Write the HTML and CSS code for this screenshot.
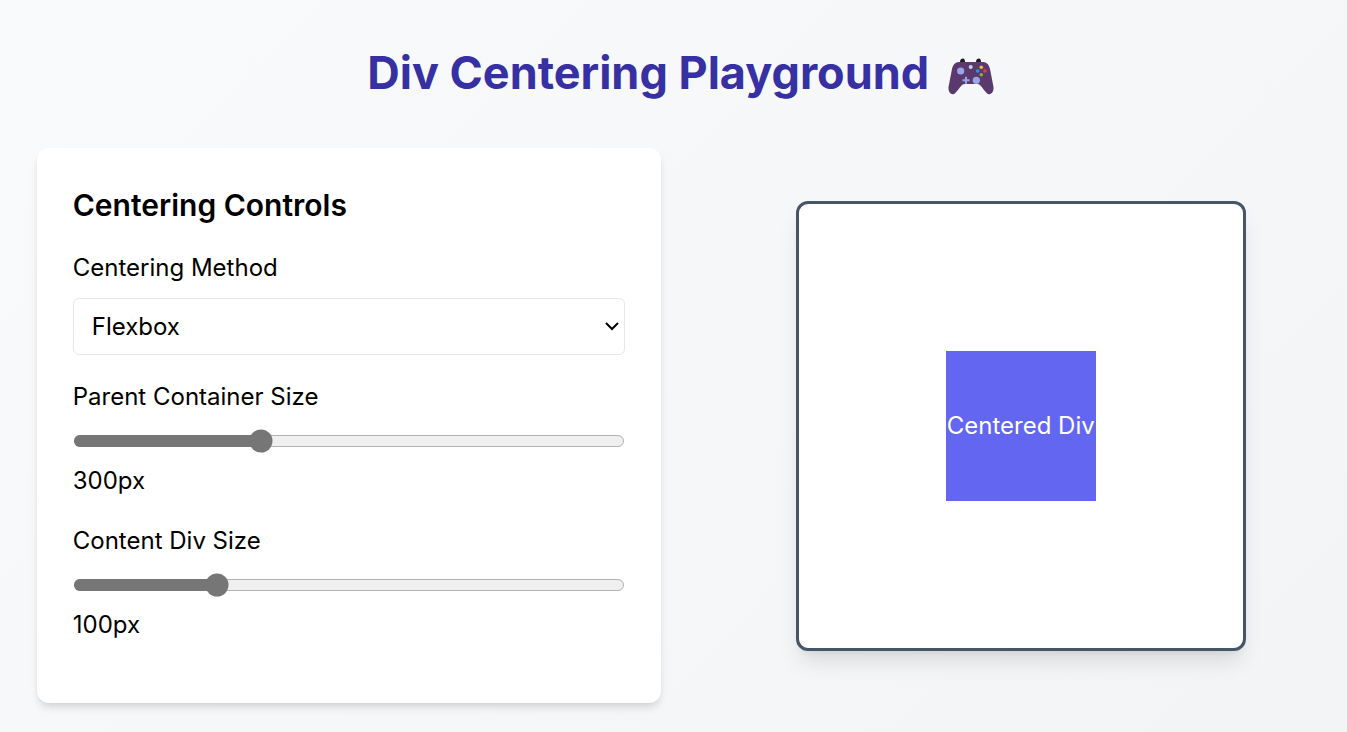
FILE: index.html
```html
<!DOCTYPE html>
<html lang="en">
  <head>
    <meta charset="UTF-8" />
    <meta name="viewport" content="width=device-width, initial-scale=1.0" />
    <title>Div Centering Playground</title>
    <link rel="stylesheet" href="styles.css">
  </head>

  <body>
    <main class="page">
      <h1 class="page-title">
        Div Centering Playground
        <svg class="gamepad" viewBox="0 0 46 40" aria-hidden="true">
          <path fill="#1f1b24" d="M12 5 Q12 1.5 15 1.5 Q17 1.5 17 5Z M28 5 Q28 1.5 31 1.5 Q33 1.5 33 5Z" />
          <path fill="#5a3a6e" d="M11 5H35C39 5 41 8 42 12L45.5 30C46 35 43 38 40 37C38 36 34 30 32 28C31 27.5 30 27 29 27H17C16 27 15 27.5 14 28C12 30 8 36 6 37C3 38 0 35 .5 30L4 12C5 8 7 5 11 5Z" />
          <circle fill="#9aa5e8" cx="12.7" cy="14" r="3.6" />
          <circle fill="#9aa5e8" cx="28.3" cy="23.3" r="3.6" />
          <path fill="#9aa5e8" d="M17 19.8h2v2.5h2.5v2h-2.5v2.5h-2v-2.5h-2.5v-2h2.5Z" />
          <circle fill="#cfcfd6" cx="22.7" cy="10" r="2" />
          <circle fill="#f4b72e" cx="33.3" cy="10.3" r="1.8" />
          <circle fill="#1e9be8" cx="29.7" cy="14" r="1.8" />
          <circle fill="#ee3b3b" cx="37" cy="14" r="1.8" />
          <circle fill="#7cb82f" cx="33.3" cy="17.7" r="1.8" />
        </svg>
      </h1>

      <div class="playground">
        <!-- Controls -->
        <section class="controls">
          <h2>Centering Controls</h2>

          <div class="field">
            <label for="method">Centering Method</label>
            <select id="method">
              <option>Flexbox</option>
              <option>Grid</option>
              <option>Absolute Position</option>
              <option>Margin Auto</option>
            </select>
          </div>

          <div class="field">
            <label for="parentSize">Parent Container Size</label>
            <input id="parentSize" type="range" min="200" max="500" value="300" />
            <span class="value">300px</span>
          </div>

          <div class="field">
            <label for="contentSize">Content Div Size</label>
            <input id="contentSize" type="range" min="50" max="250" value="100" />
            <span class="value">100px</span>
          </div>
        </section>

        <!-- Preview -->
        <section class="preview">
          <div class="parent-box">
            <div class="content-box">Centered Div</div>
          </div>
        </section>
      </div>
    </main>
  </body>
</html>
```

FILE: styles.css
```css
/* General Styles */

html {
  height: 100%;
}

body {
  margin: 0;
  padding: 0;
  min-height: 100%;
  overflow: hidden;
  font-family: Inter, "Liberation Sans", sans-serif;
  color: #000;
  background: linear-gradient(135deg, #f9fafb, #f3f4f6);
  zoom: 1.5;
}

.page {
  width: 864px;
  margin-left: 24.5px;
  padding-top: 23.4px;
}

.page-title {
  margin: 0 0 25.27px;
  text-align: center;
  font-size: 30px;
  line-height: 50px;
  font-weight: 700;
  color: #3730a3;
}

.gamepad {
  width: 30.67px;
  height: 26.67px;
  margin-left: 5.67px;
  margin-right: 5.33px;
  vertical-align: -5.5px;
}

/* Two columns */

.playground {
  display: grid;
  grid-template-columns: 1fr 1fr;
  gap: 32px;
  align-items: center;
}

/* Controls */

.controls {
  background: white;
  padding: 24px;
  border-radius: 8px;
  box-shadow: 0 4px 6px -1px rgba(0, 0, 0, 0.1), 0 2px 4px -2px rgba(0, 0, 0, 0.1);
}

.controls h2 {
  margin: 0 0 16px;
  font-size: 20px;
  line-height: 28px;
  font-weight: 600;
}

.field {
  margin-bottom: 16px;
}

.field label {
  display: block;
  margin-bottom: 8px;
  line-height: 24px;
}

.field select {
  display: block;
  width: 100%;
  height: 38px;
  padding: 8px;
  font-family: inherit;
  font-size: 16px;
  color: #000;
  background: white;
  border: 1px solid #e5e7eb;
  border-radius: 4px;
}

.field input[type="range"] {
  display: block;
  width: 100%;
  margin: 9.33px 0 0;
  accent-color: #767676;
}

.value {
  display: block;
  margin-top: 6.67px;
  line-height: 24px;
}

/* Preview */

.preview {
  display: flex;
  justify-content: center;
  align-items: center;
  padding-top: 0.67px;
}

.parent-box {
  box-sizing: border-box;
  width: 300px;
  height: 300px;
  display: flex;
  justify-content: center;
  align-items: center;
  background: white;
  border: 2px solid #475569;
  border-radius: 8px;
  box-shadow: 0 10px 15px -3px rgba(0, 0, 0, 0.1), 0 4px 6px -4px rgba(0, 0, 0, 0.1);
}

.content-box {
  width: 100px;
  height: 100px;
  display: flex;
  justify-content: center;
  align-items: center;
  white-space: nowrap;
  color: white;
  background: #6366f1;
}
```
